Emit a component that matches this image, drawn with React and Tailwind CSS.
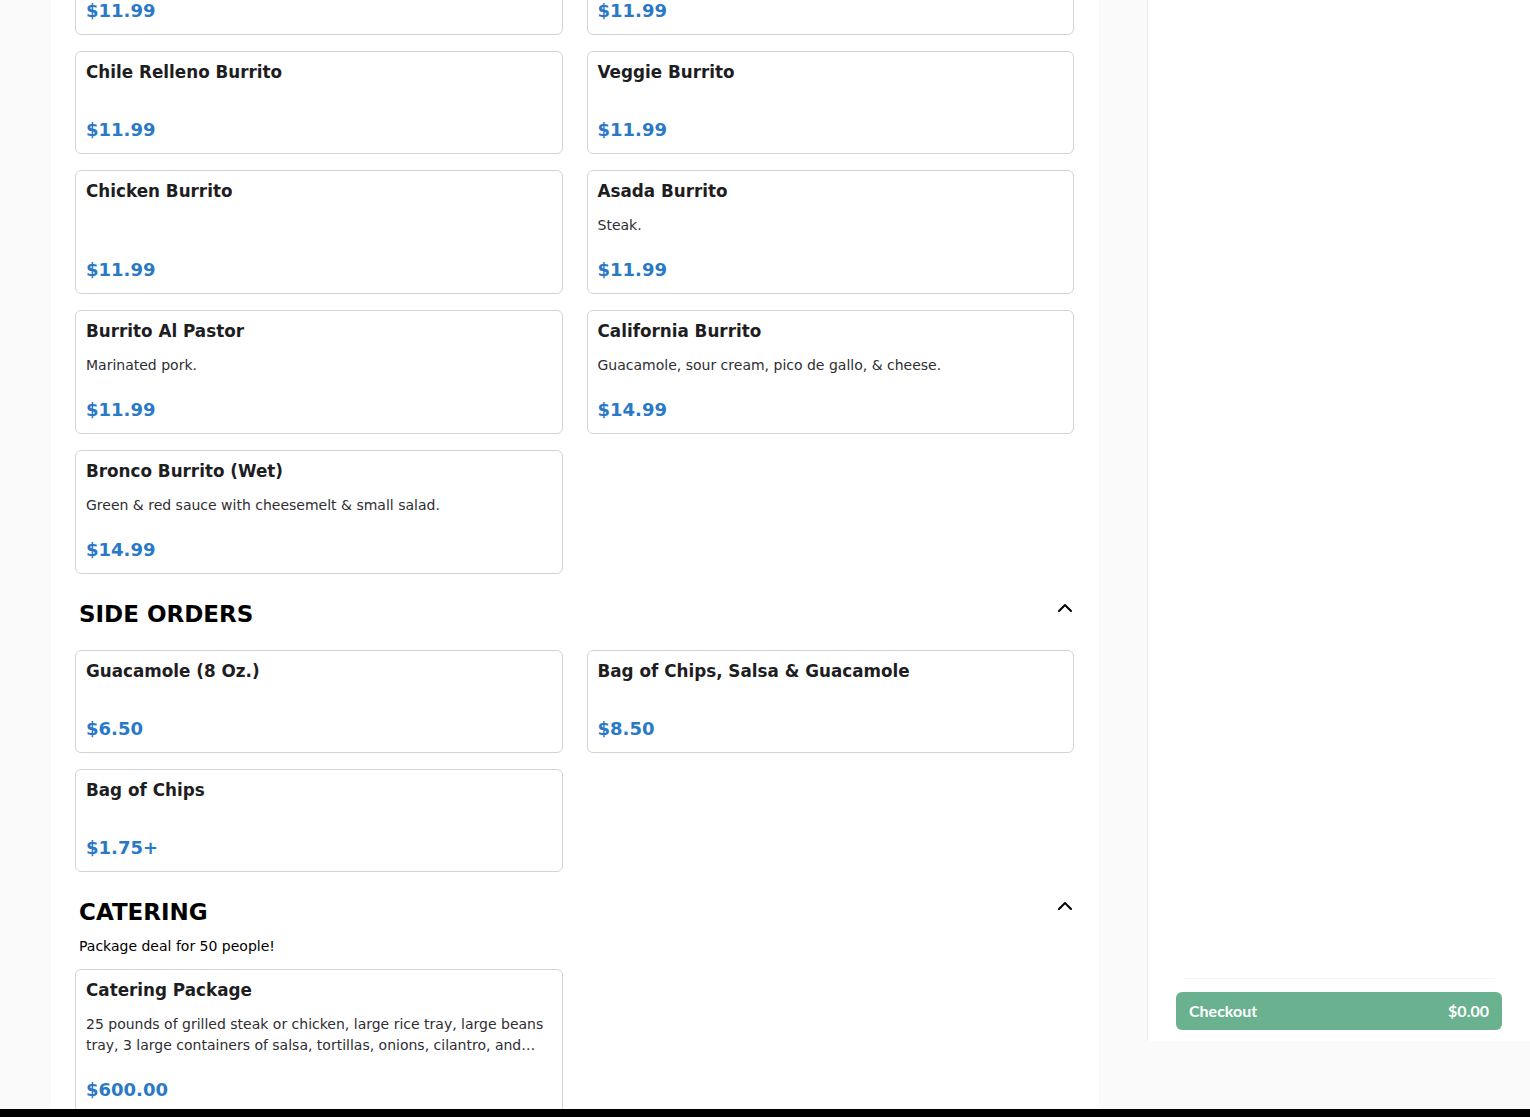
import { ChevronUp } from 'lucide-react';

const topRow = [
	{ name: 'Bean & Cheese Burrito', price: '$11.99' },
	{ name: 'Carnitas Burrito', price: '$11.99' },
];

const burritos = [
	{ name: 'Chile Relleno Burrito', price: '$11.99' },
	{ name: 'Veggie Burrito', price: '$11.99' },
	{ name: 'Chicken Burrito', price: '$11.99' },
	{ name: 'Asada Burrito', desc: 'Steak.', price: '$11.99' },
	{ name: 'Burrito Al Pastor', desc: 'Marinated pork.', price: '$11.99' },
	{ name: 'California Burrito', desc: 'Guacamole, sour cream, pico de gallo, & cheese.', price: '$14.99' },
	{ name: 'Bronco Burrito (Wet)', desc: 'Green & red sauce with cheesemelt & small salad.', price: '$14.99' },
];

const sides = [
	{ name: 'Guacamole (8 Oz.)', price: '$6.50' },
	{ name: 'Bag of Chips, Salsa & Guacamole', price: '$8.50' },
	{ name: 'Bag of Chips', price: '$1.75+' },
];

const catering = [
	{
		name: 'Catering Package',
		desc: '25 pounds of grilled steak or chicken, large rice tray, large beans tray, 3 large containers of salsa, tortillas, onions, cilantro, and limes. Serves 50 people.',
		price: '$600.00',
	},
];

function ItemCard({ item }) {
	return (
		<div className="bg-white border border-[#d3d3d6] rounded-md px-[10px] pt-[9px] pb-[11px] flex flex-col">
			<div className="text-[16.8px] leading-[22px] font-bold text-[#1d1d22]">{item.name}</div>
			<div className="mt-[13px] mb-[22px] text-[14px] leading-[21px] text-[#2e2e33] line-clamp-2">{item.desc}</div>
			<div className="mt-auto text-[18px] leading-[24px] font-bold text-[#2a79c6]">{item.price}</div>
		</div>
	);
}

function Grid({ items, className = '' }) {
	return (
		<div className={`grid grid-cols-2 gap-x-6 gap-y-4 ${className}`}>
			{items.map((item) => (
				<ItemCard key={item.name} item={item} />
			))}
		</div>
	);
}

function Section({ title, subtitle, items }) {
	return (
		<div className="pt-6">
			<div className="flex items-start justify-between ml-1 pb-[6px]">
				<h2 className="text-[23px] leading-[32px] font-bold text-black">{title}</h2>
				<button className="-mt-[2px] -mr-[3px] text-black">
					<ChevronUp size={24} strokeWidth={2} />
				</button>
			</div>
			{!!subtitle && <div className="ml-1 pt-[2px] text-[14px] leading-[21px] text-black">{subtitle}</div>}
			<Grid items={items} className={subtitle ? 'mt-[12px]' : 'mt-[14px]'} />
		</div>
	);
}

export default function App() {
	return (
		<div className="h-[1117px] overflow-hidden bg-[#fafafa] flex flex-col" style={{ fontFamily: '"DejaVu Sans", sans-serif' }}>
			<div className="h-[1109px] flex overflow-hidden">
				<div className="w-[51px] shrink-0" />
				<main className="w-[1048px] shrink-0 bg-white pl-6 pr-[25px] overflow-hidden">
					<Grid items={topRow} className="-mt-[68px]" />
					<Grid items={burritos} className="mt-4" />
					<Section title="SIDE ORDERS" items={sides} />
					<Section title="CATERING" subtitle="Package deal for 50 people!" items={catering} />
				</main>
				<div className="w-[48px] shrink-0" />
				<aside className="flex-1 h-[1041px] bg-white border-l border-[#efefef] flex flex-col justify-end px-[28px] pb-[11px]">
					<div className="h-px bg-[#f4f4f4] mx-[7px] mb-[13px]" />
					<button
						className="h-[38px] w-full rounded-md bg-[#6ab18f] px-[13px] flex items-center justify-between text-white text-[16px] font-bold"
						style={{ fontFamily: 'Lato, "Open Sans", sans-serif' }}
					>
						<span>Checkout</span>
						<span>$0.00</span>
					</button>
				</aside>
			</div>
			<div className="h-2 bg-black" />
		</div>
	);
}
